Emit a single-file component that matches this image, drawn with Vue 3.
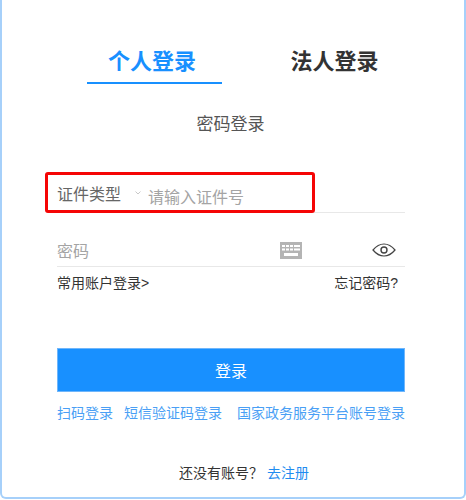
<template>
  <div class="login-card">
    <div class="tabs">
      <div class="tab active">个人登录</div>
      <div class="tab">法人登录</div>
    </div>
    <div class="subtitle">密码登录</div>

    <div class="form">
      <div class="row id-row">
        <span class="id-type">证件类型</span>
        <svg class="arrow" width="6" height="4" viewBox="0 0 6 4">
          <path d="M0.500 0.500L3 3L5.500 0.500" fill="none" stroke="#c8c8c8" stroke-width="1" />
        </svg>
        <span class="placeholder">请输入证件号</span>
        <div class="highlight"></div>
      </div>

      <div class="row pwd-row">
        <span class="placeholder">密码</span>
        <svg class="keyboard" width="22" height="17" viewBox="0 0 22 17">
          <rect width="22" height="17" fill="#b4b4b4" />
          <g fill="#fff">
            <rect x="2" y="3" width="3" height="2" />
            <rect x="6" y="3" width="3" height="2" />
            <rect x="10" y="3" width="3" height="2" />
            <rect x="14" y="3" width="6" height="2" />
            <rect x="2" y="6.500" width="3" height="2" />
            <rect x="6" y="6.500" width="3" height="2" />
            <rect x="10" y="6.500" width="3" height="2" />
            <rect x="14" y="6.500" width="6" height="2" />
            <rect x="4" y="11" width="14" height="3" />
          </g>
        </svg>
        <svg class="eye" width="24" height="14" viewBox="0 0 24 14">
          <path d="M1 7C4.500 2.800 8 1 12 1s7.500 1.800 11 6c-3.500 4.200-7 6-11 6S4.500 11.200 1 7z" fill="none" stroke="#444" stroke-width="1.200" />
          <circle cx="12" cy="7" r="3" fill="none" stroke="#444" stroke-width="1.400" />
        </svg>
      </div>

      <div class="links-row">
        <a class="dark-link">常用账户登录&gt;</a>
        <a class="dark-link">忘记密码?</a>
      </div>

      <button class="submit">登录</button>

      <div class="other-ways">
        <a>扫码登录</a>
        <a class="sms">短信验证码登录</a>
        <a class="gov">国家政务服务平台账号登录</a>
      </div>
    </div>

    <div class="register">
      <span>还没有账号？</span>
      <a>去注册</a>
    </div>
  </div>
</template>

<script setup>
</script>

<style scoped>
.login-card {
  box-sizing: border-box;
  width: 466px;
  height: 499px;
  border: 2px solid #a6d0fa;
  border-top: none;
  border-radius: 0 0 6px 6px;
  background: #fff;
  font-family: "Liberation Sans", "Noto Sans CJK SC", sans-serif;
  color: #333;
}

/* tabs */
.tabs {
  display: flex;
  gap: 45px;
  padding: 45px 0 0 85px;
}

.tab {
  box-sizing: content-box;
  width: 135px;
  height: 37px;
  line-height: 33px;
  text-align: center;
  font-size: 22px;
  font-weight: 700;
  color: #333;
}

.tab.active {
  width: 130px;
  padding-right: 5px;
  color: #1890ff;
  border-bottom: 2px solid #1890ff;
}

.subtitle {
  margin-top: 27px;
  padding-right: 5px;
  text-align: center;
  font-size: 17px;
  line-height: 28px;
  color: #555;
}

/* form */
.form {
  width: 348px;
  margin: 33px 0 0 55px;
}

.row {
  position: relative;
  display: flex;
  align-items: center;
  box-sizing: border-box;
  border-bottom: 1px solid #e8e8e8;
}

.id-row {
  height: 41px;
  padding-top: 2px;
}

.id-type {
  font-size: 16px;
  color: #666;
}

.arrow {
  margin: 0 7px 0 14px;
}

.placeholder {
  font-size: 16px;
  color: #a4a4a4;
}

.id-row .placeholder {
  position: relative;
  top: 3px;
}

.highlight {
  position: absolute;
  left: -12px;
  top: 0;
  width: 270px;
  height: 41px;
  box-sizing: border-box;
  border: 3px solid #f50505;
  border-radius: 3px;
}

.pwd-row {
  height: 54px;
  padding-top: 21px;
}

.keyboard {
  margin-left: auto;
}

.eye {
  margin-left: 70px;
  margin-right: 9px;
}

.links-row {
  display: flex;
  justify-content: space-between;
  margin-top: 6px;
  padding-right: 7px;
  font-size: 14px;
  line-height: 20px;
}

.dark-link {
  color: #333;
}

.submit {
  display: block;
  width: 348px;
  height: 44px;
  margin-top: 55px;
  border: 1px solid #6fb6fb;
  background: #1890ff;
  color: #fff;
  font: inherit;
  font-size: 16px;
}

.other-ways {
  display: flex;
  margin-top: 11px;
  font-size: 14px;
  line-height: 20px;
  white-space: nowrap;
  color: #4a9ff5;
}

.sms {
  margin-left: 11px;
}

.gov {
  margin-left: 15px;
}

.register {
  margin-top: 40px;
  padding-left: 22px;
  text-align: center;
  font-size: 14px;
  line-height: 20px;
  color: #333;
}

.register a {
  margin-left: 4px;
  color: #1f8cf0;
}
</style>

<style>
html,
body {
  margin: 0;
  background: #fff;
}
</style>
